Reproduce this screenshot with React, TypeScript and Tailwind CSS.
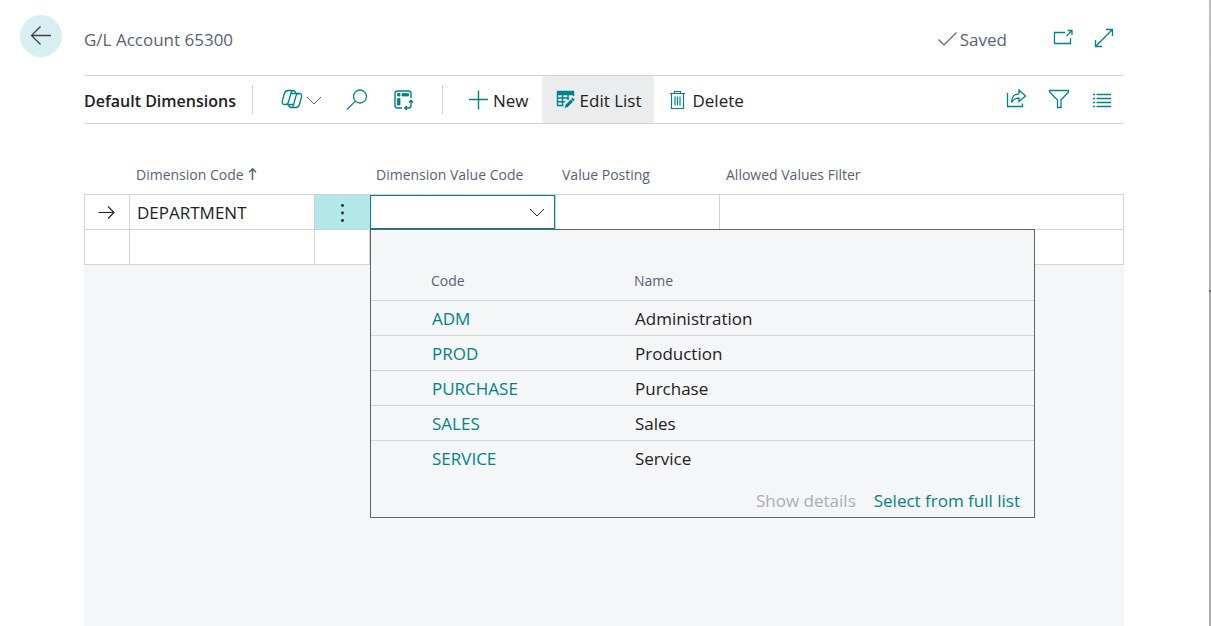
import React from "react";

const dimensionValues = [
  { code: "ADM", name: "Administration" },
  { code: "PROD", name: "Production" },
  { code: "PURCHASE", name: "Purchase" },
  { code: "SALES", name: "Sales" },
  { code: "SERVICE", name: "Service" },
];

type IconProps = { className?: string; children: React.ReactNode; size?: number; stroke?: number };

function Icon({ className = "", children, size = 22, stroke = 1.3 }: IconProps) {
  return (
    <svg
      aria-hidden="true"
      width={size}
      height={size}
      viewBox={`0 0 ${size} ${size}`}
      fill="none"
      stroke="currentColor"
      strokeWidth={stroke}
      className={`shrink-0 ${className}`}
    >
      {children}
    </svg>
  );
}

function IconButton({ label, children }: { label: string; children: React.ReactNode }) {
  return (
    <button type="button" aria-label={label} className="flex shrink-0 items-center text-[#00828a]">
      {children}
    </button>
  );
}

function Chevron({ className = "" }: { className?: string }) {
  return (
    <Icon size={16} stroke={1} className={className}>
      <path d="M1 5 8 12 15 5" />
    </Icon>
  );
}

function Header() {
  return (
    <header className="flex h-[75px] pr-[9px] pl-5">
      <div className="w-16 shrink-0 pt-[15px]">
        <button
          type="button"
          aria-label="Back"
          className="flex size-[42px] items-center justify-center rounded-full bg-[#d8eff1] text-[#404040]"
        >
          <Icon size={22} stroke={1.3}>
            <path d="M21 10.500H1.500M10.500 1.500 1.500 10.500 10.500 19.500" />
          </Icon>
        </button>
      </div>
      <div className="flex flex-1 items-center pt-[5px] text-[#586272]">
        <h1 className="text-[17px] leading-6">G/L Account 65300</h1>
        <div className="ml-auto flex items-center gap-[3px] text-[17px] leading-6">
          <Icon size={19} stroke={1.2}>
            <path d="M0.500 8.500 6 14 18.500 1.500" />
          </Icon>
          <span>Saved</span>
        </div>
        <div className="ml-[45px] flex items-center gap-[19px] pb-1">
          <IconButton label="Open in new window">
            <Icon>
              <path d="M13 5.500H2.500V16.500H18.500V11M14.500 9 20 3.500M15.500 3.500H20V8" />
            </Icon>
          </IconButton>
          <IconButton label="Expand">
            <Icon>
              <path d="M2.500 19.500 19.500 2.500M13 2.500H19.500V9M2.500 13V19.500H9" />
            </Icon>
          </IconButton>
        </div>
      </div>
    </header>
  );
}

function Toolbar() {
  return (
    <div role="toolbar" className="flex h-[49px] items-stretch border-y border-[#d2d3d6] text-[17px] leading-6 text-[#212121]">
      <h2 className="flex w-[168px] shrink-0 items-center pt-[2px] text-base font-semibold">Default Dimensions</h2>
      <div className="my-[9px] w-px bg-[#d2d3d6]" />
      <div className="flex w-[189px] shrink-0 items-center gap-6 pl-7">
        <button type="button" aria-label="Copilot" className="flex items-center gap-[3px] text-[#00828a]">
          <Icon stroke={1.3}>
            <path d="M14.900 4.500C14.400 2 13.500 1.500 12 1.500H7C5 1.500 4 2.500 3.400 4.500L1.400 11.500C0.700 14 1.500 15.500 3.500 15.500H7.500" />
            <path d="M7.500 15.500C8 18 8.900 18.500 10.400 18.500H14.900C16.900 18.500 17.900 17.500 18.400 15.500L20.400 8.500C21.100 6 20.400 4.500 18.400 4.500H14.900" />
            <path d="M12 1.500C10.800 1.500 10.300 2.500 10 3.600L7.500 13C7 14.800 6.500 15.500 5 15.500" />
            <path d="M17.400 4.500C15.900 4.500 15.400 5.200 14.900 7L12.400 16.400C12.100 17.500 11.600 18.500 10.400 18.500" />
            <path d="M9.700 4.500H14.900M7.500 15.500H12.600" />
          </Icon>
          <Chevron className="text-[#586272]" />
        </button>
        <IconButton label="Search">
          <Icon>
            <circle cx="14" cy="7.500" r="6.500" />
            <path d="M9.400 12.100 1 20.500" />
          </Icon>
        </IconButton>
        <IconButton label="Analyze">
          <Icon stroke={1.4}>
            <path d="M10 19H5.500A2.500 2.500 0 0 1 3 16.500V4.500A2.500 2.500 0 0 1 5.500 2H16.500A2.500 2.500 0 0 1 19 4.500V9" />
            <path d="M19 11.500V16.500A2.500 2.500 0 0 1 16.500 19H13M17 13.500 19 11.300 21 13.500M15 17 12.800 19 15 21" />
            <path d="M5.500 4.500H8V7H5.500zM10 4.500h6.500V7H10zM5.500 9.500H8v6.500H5.500z" fill="currentColor" stroke="currentColor" strokeWidth="0.800" />
          </Icon>
        </IconButton>
      </div>
      <div className="my-[9px] w-px bg-[#d2d3d6]" />
      <div className="flex pl-3">
        <button type="button" className="flex items-center gap-[3px] px-[13px]">
          <Icon className="text-[#00828a]" stroke={1.4}>
            <path d="M10.500 1.500v19M1 10.500h19" />
          </Icon>
          <span className="pt-[2px]">New</span>
        </button>
        <button type="button" aria-pressed="true" className="flex items-center gap-[3px] rounded-sm bg-[#ebecee] px-[13px]">
          <Icon className="text-[#00828a]" stroke={1.4}>
            <path d="M2.500 2.500H18.500V5.500H2.500z" fill="currentColor" />
            <path d="M2.500 5V16.500H8.500M7.500 5V16.500M13 5V11M18.500 5V7M2.500 9H14M2.500 12.800H10" />
            <path d="M9 19.800 10.200 15.800 17.500 8.200 20.200 10.700 13 18.300z" fill="currentColor" stroke="#ebecee" strokeWidth="0.800" />
            <path d="M15.200 9.800 18.600 13" stroke="#ebecee" strokeWidth="0.800" />
          </Icon>
          <span className="pt-[2px]">Edit List</span>
        </button>
        <button type="button" className="flex items-center gap-[3px] px-[13px]">
          <Icon className="text-[#00828a]" stroke={1.2}>
            <path d="M3 4.500H18M7.500 4.300V2.500H13.500V4.300M4.500 4.500V19.500H16.500V4.500" />
            <path d="M8 7.500V16.500M10.500 7.500V16.500M13 7.500V16.500" />
          </Icon>
          <span className="pt-[2px]">Delete</span>
        </button>
      </div>
      <div className="ml-auto flex items-center gap-[21px] pr-[11px] pb-px">
        <IconButton label="Share">
          <Icon>
            <path d="M2.500 5V18.500H17.500V15.500" />
            <path d="M6.500 14.500C6.500 8.500 9.500 5.800 14 5.800V2L20.500 8 14 13.500V10C10.500 10 8 11.500 6.500 14.500z" />
          </Icon>
        </IconButton>
        <IconButton label="Filter">
          <Icon>
            <path d="M1.500 2.500H20.500V4L13 12V19.500H9.500V12L1.500 4z" />
          </Icon>
        </IconButton>
        <IconButton label="Show as list">
          <Icon>
            <path d="M2 6.500h2M5.500 6.500H20M2 10.500h2M5.500 10.500H20M2 14.500h2M5.500 14.500H20M2 18.500h2M5.500 18.500H20" />
          </Icon>
        </IconButton>
      </div>
    </div>
  );
}

function ValueLookup() {
  return (
    <div className="absolute top-full left-0 z-10 w-[665px] border border-[#5f6368] bg-[#f5f6f8]">
      <table className="w-full table-fixed border-separate border-spacing-0 text-left">
        <colgroup>
          <col className="w-[263px]" />
          <col />
        </colgroup>
        <thead>
          <tr className="text-sm leading-5 text-[#586272]">
            <th className="h-[71px] border-b border-[#d2d3d6] pb-[9px] pl-[60px] align-bottom font-normal">Code</th>
            <th className="h-[71px] border-b border-[#d2d3d6] pb-[9px] align-bottom font-normal">Name</th>
          </tr>
        </thead>
        <tbody className="text-[17px] leading-6 [&>tr:last-child>td]:border-transparent">
          {dimensionValues.map((value) => (
            <tr key={value.code}>
              <td className="h-[35px] border-b border-[#d2d3d6] pt-[2px] pl-[61px]">
                <a href="#" className="text-[#00828a]">{value.code}</a>
              </td>
              <td className="h-[35px] border-b border-[#d2d3d6] pt-[2px] pl-px text-[#212121]">{value.name}</td>
            </tr>
          ))}
        </tbody>
      </table>
      <div className="flex h-[41px] items-center justify-end gap-[18px] pt-2 pr-[14px] text-[17px] leading-6">
        <button type="button" disabled className="text-[#a9adb5]">Show details</button>
        <a href="#" className="text-[#00828a]">Select from full list</a>
      </div>
    </div>
  );
}

function DimensionsTable() {
  const head = "h-[71px] border-b border-[#d2d3d6] pb-[9px] pl-[6px] align-bottom font-normal";
  const cell = "h-[35px] border-r border-b border-[#d2d3d6]";
  return (
    <table className="w-full table-fixed border-separate border-spacing-0 bg-white text-left">
      <colgroup>
        <col className="w-[46px]" />
        <col className="w-[185px]" />
        <col className="w-[55px]" />
        <col className="w-[186px]" />
        <col className="w-[164px]" />
        <col />
      </colgroup>
      <thead>
        <tr className="text-sm leading-5 text-[#586272]">
          <td className={head} />
          <th className={head}>
            <span className="flex items-center gap-1">
              Dimension Code
              <svg aria-hidden="true" width="9" height="14" viewBox="0 0 9 14" fill="none" stroke="currentColor" strokeWidth="1.500">
                <path d="M4.500 12V0.800M1 4.300 4.500 0.800 8 4.300" />
              </svg>
            </span>
          </th>
          <td className={head} />
          <th className={head}>Dimension Value Code</th>
          <th className={head}>Value Posting</th>
          <th className={head}>Allowed Values Filter</th>
        </tr>
      </thead>
      <tbody className="text-[17px] leading-6 text-[#212121]">
        <tr>
          <td className={`${cell} border-l`}>
            <Icon size={18} className="mx-auto" stroke={1.1}>
              <path d="M0.500 9.500H16M10 3.500 16 9.500 10 15.500" />
            </Icon>
          </td>
          <td className={`${cell} pt-[2px] pl-[7px]`}>DEPARTMENT</td>
          <td className="h-[35px] border-b border-[#d2d3d6] bg-[#b2e8ea]">
            <button type="button" aria-label="Row options" className="flex w-full justify-center">
              <Icon size={20}>
                <g fill="currentColor" stroke="none">
                  <circle cx="9.500" cy="3.500" r="1.400" />
                  <circle cx="9.500" cy="11" r="1.400" />
                  <circle cx="9.500" cy="18.500" r="1.400" />
                </g>
              </Icon>
            </button>
          </td>
          <td className={`${cell} relative p-0`}>
            <div className="flex h-[34px] items-center border border-[#00828a] pr-[9px]">
              <input aria-label="Dimension Value Code" className="h-full min-w-0 flex-1 px-[6px] outline-none" />
              <button type="button" aria-label="Open lookup">
                <Chevron />
              </button>
            </div>
            <ValueLookup />
          </td>
          <td className={cell} />
          <td className={cell} />
        </tr>
        <tr>
          <td className={`${cell} border-l`} />
          <td className={cell} />
          <td className={cell} />
          <td className={cell} />
          <td className={cell} />
          <td className={cell} />
        </tr>
      </tbody>
    </table>
  );
}

export default function App() {
  return (
    <div className="flex min-h-screen bg-white font-['Open_Sans',sans-serif]">
      <div className="flex min-w-0 flex-1 flex-col pr-[85px]">
        <Header />
        <main className="ml-[84px] flex flex-1 flex-col bg-[#f5f6f8]">
          <div className="bg-white">
            <Toolbar />
            <DimensionsTable />
          </div>
        </main>
      </div>
      <div className="w-[2px] shrink-0 bg-[linear-gradient(#c0c0c0_0px,#b2b2b3_290px,#6c6c74_290px,#6c6c74_292px,#a9a9aa_292px,#b0b0b0_100%)]" />
    </div>
  );
}
